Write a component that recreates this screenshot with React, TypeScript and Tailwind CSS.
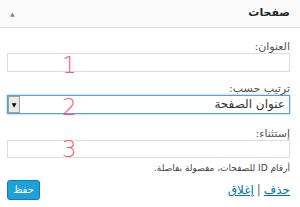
import React from 'react';

const Mark = ({ n, top }: { n: string; top: string }) => (
  <span
    className={`pointer-events-none absolute left-[62px] ${top} text-[23px] leading-none text-[#f0606a] font-['DejaVu_Sans',sans-serif] font-extralight`}
  >
    {n}
  </span>
);

export default function App() {
  return (
    <div
      dir="rtl"
      className="w-[300px] h-[207px] overflow-hidden bg-white font-['DejaVu_Sans',sans-serif] text-[#333]"
    >
      <div className="h-[28px] flex items-center justify-between pr-[10px] pl-[10px] bg-[#fafafa] border-b border-[#e0e0e0]">
        <h3 className="text-[11px] font-bold text-[#23282d]">صفحات</h3>
        <span className="text-[6px] text-[#888]">▲</span>
      </div>

      <div className="relative pt-[12px] pr-[10px] pl-[7px]">
        <label className="block text-[11px] leading-[13px] text-[#555]">العنوان:</label>
        <input className="block w-full h-[19px] border border-[#ddd] bg-white outline-none" />
        <Mark n="1" top="top-[26px]" />

        <label className="block mt-[10px] text-[11px] leading-[13px] text-[#555]">ترتيب حسب:</label>
        <div className="flex h-[19px] border border-[#5b9dd9] shadow-[0_0_2px_rgba(30,140,190,0.6)] bg-white">
          <span className="flex-1 pr-[4px] text-[12px] leading-[17px] text-[#333]">عنوان الصفحة</span>
          <span className="w-[12px] h-full flex items-center justify-center bg-[#e9e9e9] border border-[#a0a0a0] text-[6px] text-black">▼</span>
        </div>
        <Mark n="2" top="top-[68px]" />

        <label className="block mt-[13px] text-[11px] leading-[13px] text-[#555]">إستثناء:</label>
        <input className="block w-full h-[18px] border border-[#ddd] bg-white outline-none" />
        <Mark n="3" top="top-[110px]" />

        <p className="mt-[4px] text-[9px] leading-[12px] text-[#444]">أرقام ID للصفحات، مفصولة بفاصلة.</p>

        <div className="mt-[6px] flex items-center justify-between">
          <div className="text-[12px] text-[#0073aa]">
            <a className="underline">حذف</a>
            <span className="text-[#666] mx-[3px]">|</span>
            <a className="underline">إغلاق</a>
          </div>
          <button className="w-[33px] h-[20px] rounded-[3px] bg-[#1ea0d8] border border-[#0a7fb5] text-white text-[10px] leading-none">
            حفظ
          </button>
        </div>
      </div>
    </div>
  );
}
